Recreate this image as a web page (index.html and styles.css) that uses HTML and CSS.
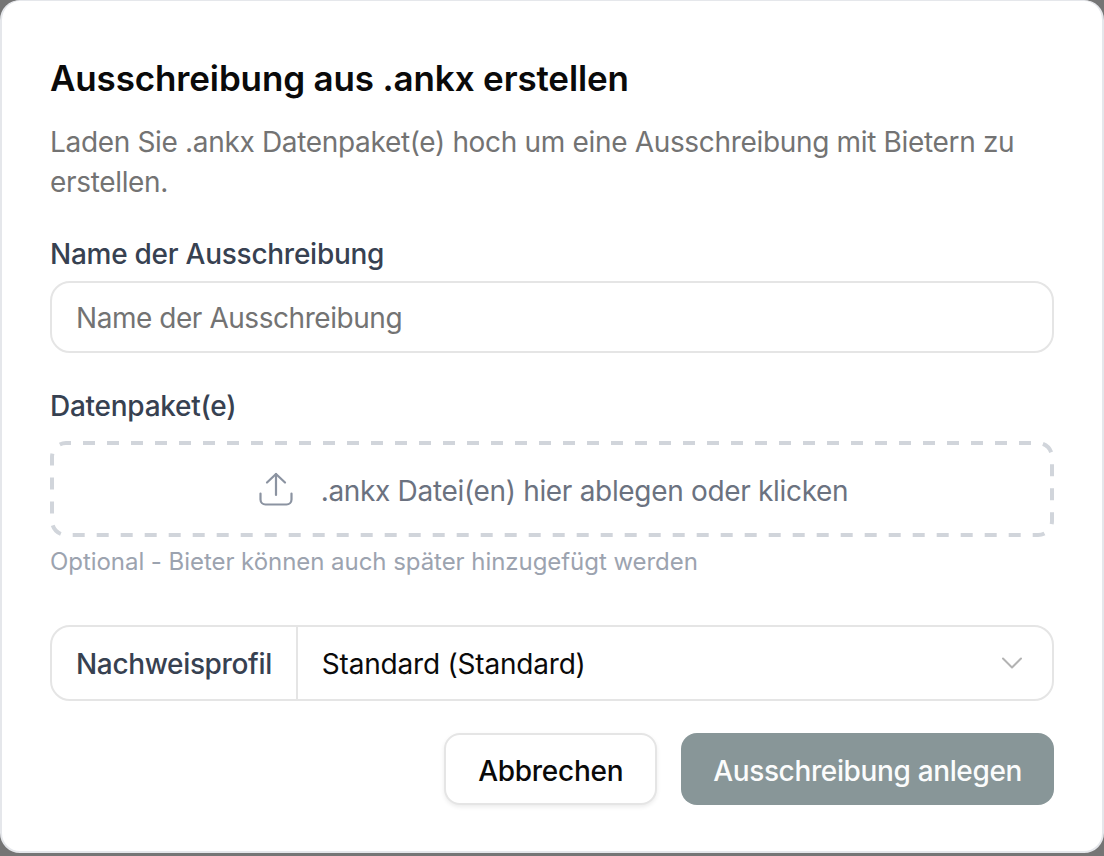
FILE: index.html
```html
<!doctype html>
<html lang="de">
  <head>
    <meta charset="UTF-8" />
    <meta name="viewport" content="width=device-width, initial-scale=1.0" />
    <title>Ausschreibung aus .ankx erstellen</title>
    <link rel="stylesheet" href="styles.css">
  </head>
  <body>
    <div class="dialog">
      <h2 class="dialog-title">Ausschreibung aus .ankx erstellen</h2>
      <p class="dialog-desc">
        Laden Sie .ankx Datenpaket(e) hoch um eine Ausschreibung mit Bietern zu
        erstellen.
      </p>

      <div class="field field-name">
        <label class="field-label" for="name">Name der Ausschreibung</label>
        <input class="text-input" id="name" type="text" placeholder="Name der Ausschreibung" />
      </div>

      <div class="field field-upload">
        <div class="field-label">Datenpaket(e)</div>
        <div class="dropzone">
          <svg class="dropzone-border" viewBox="0 0 1004 96" fill="none">
            <rect x="2" y="2" width="1000" height="92" rx="14" stroke="#d1d5db" stroke-width="4" stroke-dasharray="12 12" stroke-dashoffset="7" />
          </svg>
          <svg class="upload-icon" viewBox="0 0 36 36" fill="none" stroke="currentColor" stroke-width="2.2" stroke-linecap="round" stroke-linejoin="round">
            <path d="M2.5 22.5v6a5 5 0 0 0 5 5h21a5 5 0 0 0 5-5v-6" />
            <path d="M9 11.5 18 3l9 8.5" />
            <path d="M18 3v21" />
          </svg>
          <span class="dropzone-text">.ankx Datei(en) hier ablegen oder klicken</span>
        </div>
        <div class="field-hint">Optional - Bieter können auch später hinzugefügt werden</div>
      </div>

      <div class="select-group">
        <div class="select-addon">Nachweisprofil</div>
        <div class="select-box">
          <span>Standard (Standard)</span>
          <svg class="chevron" viewBox="0 0 24 24" fill="none" stroke="currentColor" stroke-width="2" stroke-linecap="round" stroke-linejoin="round">
            <path d="m3 7.5 9 9 9-9" />
          </svg>
        </div>
      </div>

      <div class="dialog-footer">
        <button class="btn btn-cancel" type="button">Abbrechen</button>
        <button class="btn btn-submit" type="button">Ausschreibung anlegen</button>
      </div>
    </div>
  </body>
</html>
```

FILE: styles.css
```css
html,
body {
  height: 100%;
}

body {
  margin: 0;
  background: #757575;
  font-family: Inter, "Liberation Sans", sans-serif;
  color: #000;
  overflow: hidden;
}

.dialog {
  box-sizing: border-box;
  width: 1104px;
  height: 853px;
  padding: 0 48px;
  background: #fff;
  border: 2px solid #e5e7eb;
  border-top-width: 1px;
  border-radius: 20px;
  display: flex;
  flex-direction: column;
  align-items: stretch;
}

.dialog-title {
  margin: 55px 0 0;
  font-size: 35px;
  line-height: 44px;
  letter-spacing: -0.14px;
  font-weight: 600;
  color: #0a0a0a;
}

.dialog-desc {
  margin: 22px 0 0;
  font-size: 28px;
  line-height: 40px;
  letter-spacing: -0.33px;
  color: #737373;
}

.field-label {
  font-size: 28px;
  line-height: 40px;
  letter-spacing: -0.26px;
  font-weight: 500;
  color: #374151;
  display: block;
}

.field-name {
  margin-top: 32px;
}

.text-input {
  box-sizing: border-box;
  display: block;
  width: 100%;
  height: 72px;
  margin-top: 7px;
  padding: 2px 24px 0;
  border: 2px solid #e5e5e5;
  border-radius: 20px;
  font: inherit;
  font-size: 28px;
  letter-spacing: -0.45px;
  color: #0a0a0a;
  outline: none;
}

.text-input::placeholder {
  color: #737373;
  opacity: 1;
}

.field-upload {
  margin-top: 33px;
}

.dropzone {
  box-sizing: border-box;
  height: 96px;
  margin-top: 15px;
  padding: 3px 0 0 2px;
  position: relative;
  display: flex;
  align-items: center;
  justify-content: center;
  gap: 27px;
  color: #6b7280;
  font-size: 28px;
  letter-spacing: -0.32px;
}

.dropzone-border {
  position: absolute;
  top: 0;
  left: 0;
  width: 100%;
  height: 100%;
}

.upload-icon {
  width: 36px;
  height: 36px;
  margin-top: -3px;
  color: #8b93a1;
}

.field-hint {
  margin-top: 7px;
  font-size: 24px;
  line-height: 36px;
  letter-spacing: -0.05px;
  color: #9ca3af;
}

.select-group {
  box-sizing: border-box;
  height: 76px;
  margin-top: 45px;
  display: flex;
  border: 2px solid #e5e5e5;
  border-radius: 20px;
  font-size: 28px;
}

.select-addon {
  display: flex;
  align-items: center;
  padding: 2px 24px 0;
  border-right: 2px solid #e5e5e5;
  font-weight: 500;
  letter-spacing: -0.35px;
  color: #374151;
}

.select-box {
  flex: 1;
  display: flex;
  align-items: center;
  justify-content: space-between;
  padding: 2px 28px 0 24px;
  letter-spacing: -0.2px;
  color: #0a0a0a;
}

.chevron {
  width: 24px;
  height: 24px;
  margin-top: -2px;
  color: #b3b3b3;
}

.dialog-footer {
  margin-top: 32px;
  display: flex;
  justify-content: flex-end;
  gap: 24px;
}

.btn {
  box-sizing: border-box;
  height: 72px;
  padding: 3px 32px 0;
  border-radius: 16px;
  font: inherit;
  font-size: 28px;
  font-weight: 500;
  letter-spacing: -0.36px;
}

.btn-cancel {
  background: #fff;
  border: 2px solid #e5e5e5;
  letter-spacing: -0.28px;
  color: #0a0a0a;
  box-shadow: 0 2px 4px rgba(0, 0, 0, 0.08);
}

.btn-submit {
  background: #889698;
  border: none;
  color: #fbfcfc;
}
```
